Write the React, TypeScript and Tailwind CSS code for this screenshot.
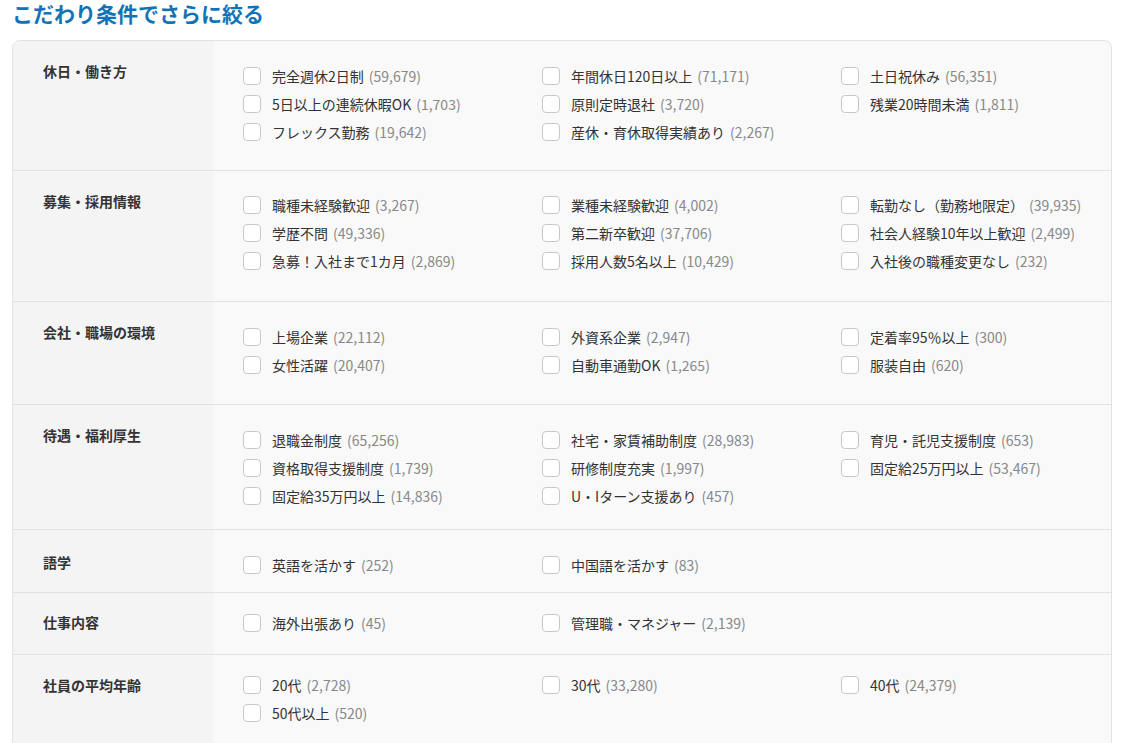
import React from 'react';

type Item = { label: string; count: string };
type Section = {
  title: string;
  items: Item[];
  height: string;
  itemsPad: string;
  titlePad: string;
};

const sections: Section[] = [
  {
    title: '休日・働き方',
    height: 'h-[129px]',
    itemsPad: 'pt-[21px]',
    titlePad: 'pt-[20px]',
    items: [
      { label: '完全週休2日制', count: '59,679' },
      { label: '年間休日120日以上', count: '71,171' },
      { label: '土日祝休み', count: '56,351' },
      { label: '5日以上の連続休暇OK', count: '1,703' },
      { label: '原則定時退社', count: '3,720' },
      { label: '残業20時間未満', count: '1,811' },
      { label: 'フレックス勤務', count: '19,642' },
      { label: '産休・育休取得実績あり', count: '2,267' },
    ],
  },
  {
    title: '募集・採用情報',
    height: 'h-[131px]',
    itemsPad: 'pt-[20px]',
    titlePad: 'pt-[20px]',
    items: [
      { label: '職種未経験歓迎', count: '3,267' },
      { label: '業種未経験歓迎', count: '4,002' },
      { label: '転勤なし（勤務地限定）', count: '39,935' },
      { label: '学歴不問', count: '49,336' },
      { label: '第二新卒歓迎', count: '37,706' },
      { label: '社会人経験10年以上歓迎', count: '2,499' },
      { label: '急募！入社まで1カ月', count: '2,869' },
      { label: '採用人数5名以上', count: '10,429' },
      { label: '入社後の職種変更なし', count: '232' },
    ],
  },
  {
    title: '会社・職場の環境',
    height: 'h-[103px]',
    itemsPad: 'pt-[21px]',
    titlePad: 'pt-[20px]',
    items: [
      { label: '上場企業', count: '22,112' },
      { label: '外資系企業', count: '2,947' },
      { label: '定着率95％以上', count: '300' },
      { label: '女性活躍', count: '20,407' },
      { label: '自動車通勤OK', count: '1,265' },
      { label: '服装自由', count: '620' },
    ],
  },
  {
    title: '待遇・福利厚生',
    height: 'h-[125px]',
    itemsPad: 'pt-[21px]',
    titlePad: 'pt-[20px]',
    items: [
      { label: '退職金制度', count: '65,256' },
      { label: '社宅・家賃補助制度', count: '28,983' },
      { label: '育児・託児支援制度', count: '653' },
      { label: '資格取得支援制度', count: '1,739' },
      { label: '研修制度充実', count: '1,997' },
      { label: '固定給25万円以上', count: '53,467' },
      { label: '固定給35万円以上', count: '14,836' },
      { label: 'U・Iターン支援あり', count: '457' },
    ],
  },
  {
    title: '語学',
    height: 'h-[63px]',
    itemsPad: 'pt-[21px]',
    titlePad: 'pt-[22px]',
    items: [
      { label: '英語を活かす', count: '252' },
      { label: '中国語を活かす', count: '83' },
    ],
  },
  {
    title: '仕事内容',
    height: 'h-[62px]',
    itemsPad: 'pt-[16px]',
    titlePad: 'pt-[19px]',
    items: [
      { label: '海外出張あり', count: '45' },
      { label: '管理職・マネジャー', count: '2,139' },
    ],
  },
  {
    title: '社員の平均年齢',
    height: 'h-[110px]',
    itemsPad: 'pt-[16px]',
    titlePad: 'pt-[20px]',
    items: [
      { label: '20代', count: '2,728' },
      { label: '30代', count: '33,280' },
      { label: '40代', count: '24,379' },
      { label: '50代以上', count: '520' },
    ],
  },
];

function CheckItem({ item }: { item: Item }) {
  return (
    <label className="flex h-[28px] cursor-pointer items-center">
      <span className="mr-[11px] block h-[18px] w-[18px] shrink-0 rounded-[4px] border border-[#c8c8c8] bg-white" />
      <span className="whitespace-nowrap text-[14px] text-[#333]">
        {item.label}
        <span className="ml-[5px] text-[#888]">({item.count})</span>
      </span>
    </label>
  );
}

export default function App() {
  return (
    <div
      className="min-h-screen bg-white px-[12px] pt-[1px] text-[#333]"
      style={{ fontFamily: '"Noto Sans CJK JP", "Noto Sans", sans-serif' }}
    >
      <h2 className="h-[24px] text-[21px] font-bold leading-[24px] text-[#1173b7]">
        こだわり条件でさらに絞る
      </h2>
      <div className="mt-[15px] w-[1100px] overflow-hidden rounded-t-[8px] border border-[#e2e2e2] bg-[#f9f9f9]">
        {sections.map((s, i) => (
          <div
            key={s.title}
            className={`flex ${s.height} ${i > 0 ? 'border-t border-[#e2e2e2]' : ''}`}
          >
            <div className={`w-[200px] shrink-0 bg-[#f4f4f4] pl-[30px] ${s.titlePad}`}>
              <p className="text-[14px] font-bold leading-[20px] text-[#333]">{s.title}</p>
            </div>
            <div className={`grid flex-1 grid-cols-[299px_299px_299px] content-start pl-[30px] ${s.itemsPad}`}>
              {s.items.map((it) => (
                <CheckItem key={it.label} item={it} />
              ))}
            </div>
          </div>
        ))}
      </div>
    </div>
  );
}
